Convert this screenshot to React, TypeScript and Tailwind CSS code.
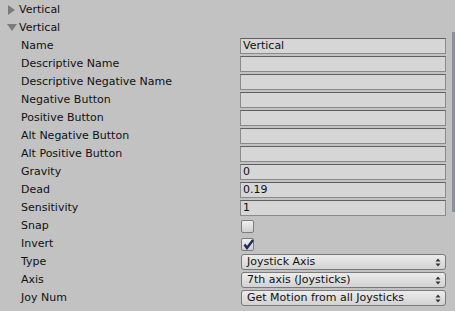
const rows: { label: string; kind: "text" | "check" | "select"; value?: string; checked?: boolean }[] = [
  { label: "Name", kind: "text", value: "Vertical" },
  { label: "Descriptive Name", kind: "text" },
  { label: "Descriptive Negative Name", kind: "text" },
  { label: "Negative Button", kind: "text" },
  { label: "Positive Button", kind: "text" },
  { label: "Alt Negative Button", kind: "text" },
  { label: "Alt Positive Button", kind: "text" },
  { label: "Gravity", kind: "text", value: "0" },
  { label: "Dead", kind: "text", value: "0.19" },
  { label: "Sensitivity", kind: "text", value: "1" },
  { label: "Snap", kind: "check", checked: false },
  { label: "Invert", kind: "check", checked: true },
  { label: "Type", kind: "select", value: "Joystick Axis" },
  { label: "Axis", kind: "select", value: "7th axis (Joysticks)" },
  { label: "Joy Num", kind: "select", value: "Get Motion from all Joysticks" },
]

function Field({ row }: { row: (typeof rows)[number] }) {
  if (row.kind === "text") {
    return (
      <div className="h-[16px] w-[206px] border border-[#8a8a8a] border-t-[#5f5f5f] bg-[#d6d6d6] pl-[2px] text-[11px] leading-[14px] text-[#111]">
        {row.value}
      </div>
    )
  }
  if (row.kind === "check") {
    return (
      <div className="relative ml-[1px] h-[13px] w-[13px] rounded-[2px] border border-[#7d7d7d] bg-gradient-to-b from-[#f0f0f0] to-[#cfcfcf]">
        {row.checked && (
          <svg viewBox="0 0 13 13" className="absolute left-[0px] top-[-1px] h-[13px] w-[13px]">
            <path d="M2.5 6.5 L5 10 L11 2" fill="none" stroke="#1e2a5a" strokeWidth="2.4" />
          </svg>
        )}
      </div>
    )
  }
  return (
    <div className="ml-[1px] flex h-[16px] w-[205px] items-center justify-between rounded-[3px] border border-[#7a7a7a] bg-gradient-to-b from-[#ececec] to-[#d2d2d2] pl-[5px] pr-[4px] text-[11px] text-[#111]">
      <span className="leading-[14px]">{row.value}</span>
      <svg viewBox="0 0 6 9" className="h-[9px] w-[6px]">
        <path d="M3 0.5 L5.5 3.5 H0.5 Z M3 8.5 L5.5 5.5 H0.5 Z" fill="#333" />
      </svg>
    </div>
  )
}

export default function App() {
  return (
    <div
      className="relative h-[311px] w-[455px] overflow-hidden bg-[#c2c2c2] pt-[1px] text-[11px] text-[#111]"
      style={{ fontFamily: '"DejaVu Sans", Verdana, sans-serif' }}
    >
      <div className="flex h-[18px] items-center pl-[8px]">
        <svg viewBox="0 0 8 10" className="mr-[3px] h-[10px] w-[8px]">
          <path d="M0 0 L7 5 L0 10 Z" fill="#7b7b7b" />
        </svg>
        <span>Vertical</span>
      </div>
      <div className="flex h-[18px] items-center pl-[7px]">
        <svg viewBox="0 0 10 8" className="mr-[2px] h-[8px] w-[10px]">
          <path d="M0 0 L10 0 L5 7 Z" fill="#7b7b7b" />
        </svg>
        <span>Vertical</span>
      </div>
      {rows.map((row) => (
        <div key={row.label} className="flex h-[18px] items-center">
          <div className="w-[240px] pl-[21px]">{row.label}</div>
          <Field row={row} />
        </div>
      ))}
      <div className="absolute right-0 top-[32px] h-[180px] w-[3px] bg-[#8d8f9e]" />
    </div>
  )
}
